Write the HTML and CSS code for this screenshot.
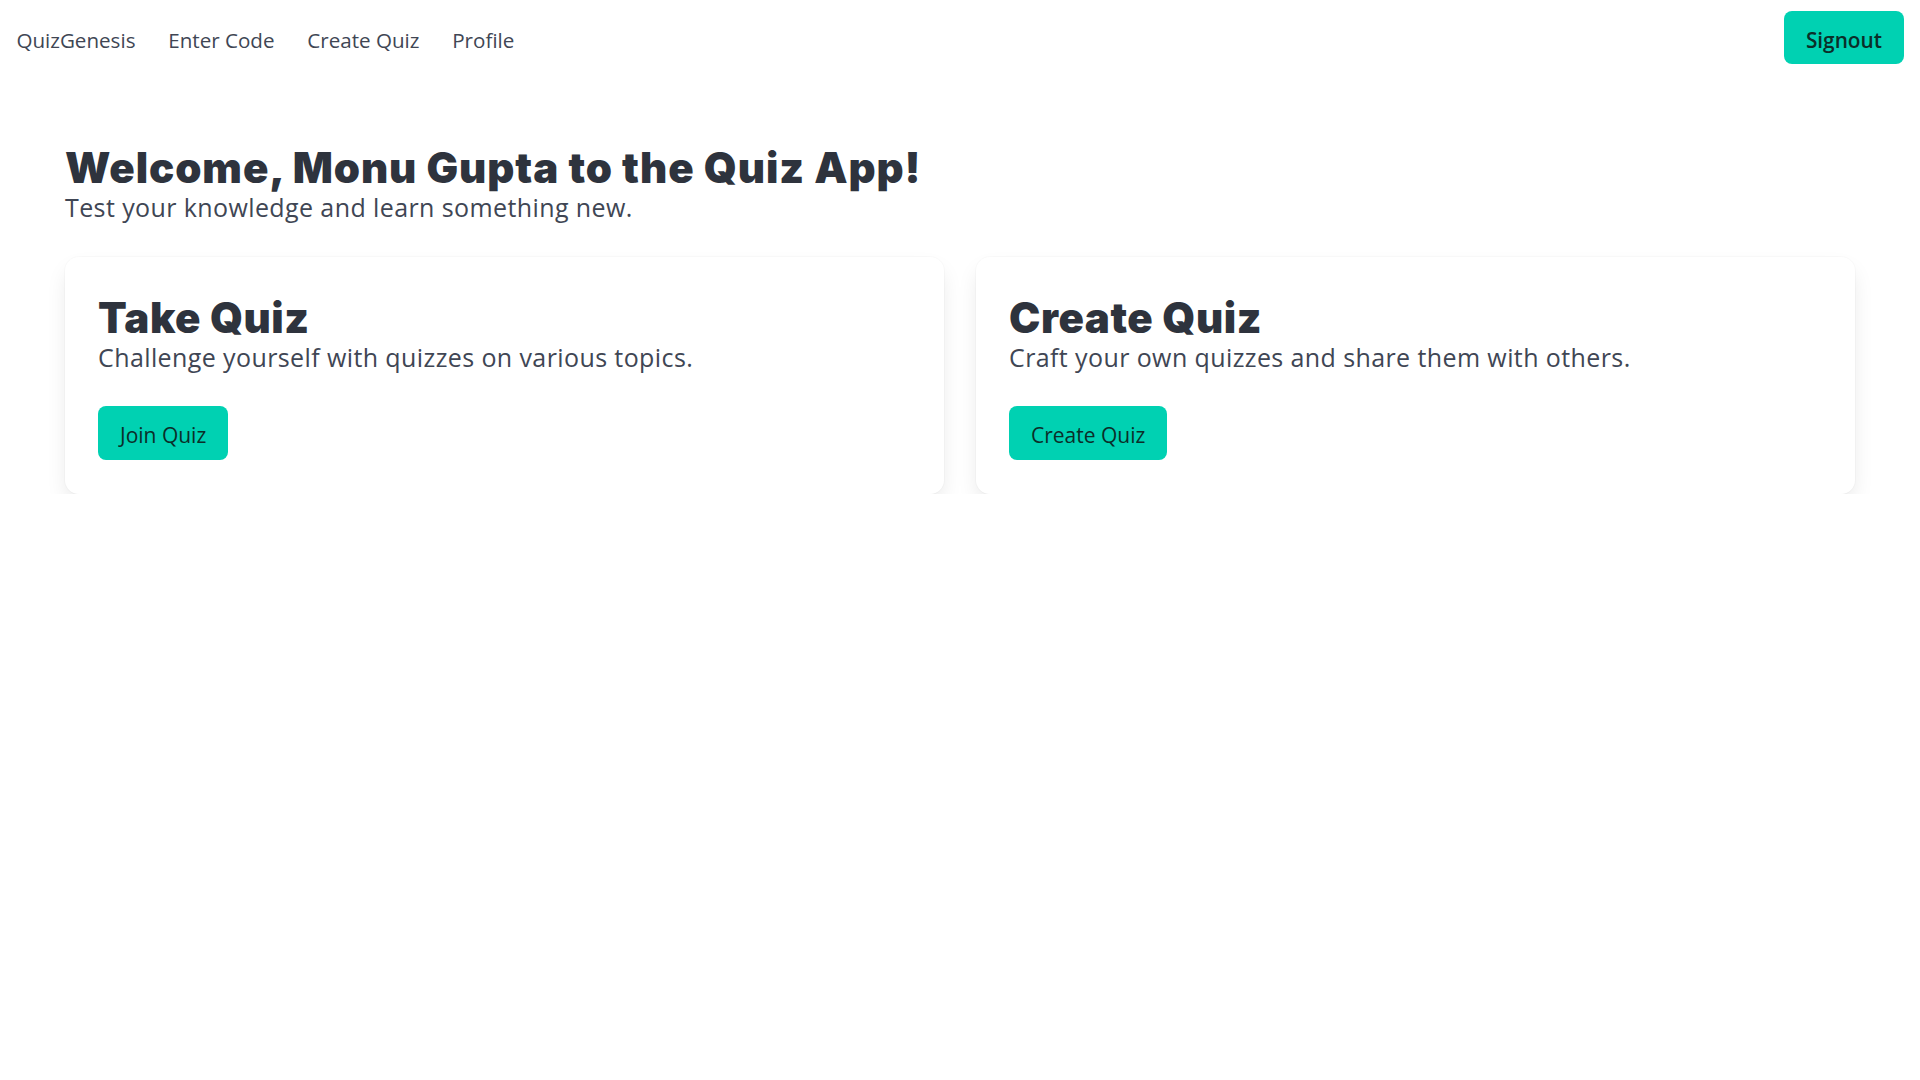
FILE: index.html
```html
<!DOCTYPE html>
<html lang="en">
<head>
<meta charset="utf-8">
<title>QuizGenesis</title>
<link rel="stylesheet" href="styles.css">
</head>
<body>
<nav class="navbar">
  <div class="nav-links">
    <a class="nav-item" href="#">QuizGenesis</a>
    <a class="nav-item" href="#">Enter Code</a>
    <a class="nav-item" href="#">Create Quiz</a>
    <a class="nav-item" href="#">Profile</a>
  </div>
  <button class="btn btn-signout">Signout</button>
</nav>
<main class="section">
  <h1 class="title">Welcome, Monu Gupta to the Quiz App!</h1>
  <p class="subtitle">Test your knowledge and learn something new.</p>
  <div class="cards">
    <div class="card">
      <h2 class="card-title">Take Quiz</h2>
      <p class="card-text">Challenge yourself with quizzes on various topics.</p>
      <button class="btn">Join Quiz</button>
    </div>
    <div class="card">
      <h2 class="card-title">Create Quiz</h2>
      <p class="card-text">Craft your own quizzes and share them with others.</p>
      <button class="btn">Create Quiz</button>
    </div>
  </div>
</main>
</body>
</html>
```
FILE: styles.css
```css
* { box-sizing: border-box; }
body {
  margin: 0;
  background: #ffffff;
  font-family: "Open Sans", "Noto Sans", sans-serif;
  color: #404654;
}
.navbar {
  display: flex;
  align-items: center;
  justify-content: space-between;
  height: 75px;
  padding-right: 16px;
}
.nav-links {
  display: flex;
  align-items: center;
  margin-top: 4px;
}
.nav-item {
  padding: 0 16.4px;
  font-size: 20.6px;
  line-height: 28px;
  color: #404654;
  text-decoration: none;
}
.btn {
  display: inline-flex;
  align-items: center;
  justify-content: center;
  height: 54px;
  padding: 3px 22px 0;
  border: none;
  border-radius: 8px;
  background: #00d1b2;
  color: #0b2e29;
  font-family: inherit;
  font-size: 21px;
  cursor: pointer;
}
.btn-signout {
  height: 53px;
  padding-top: 4px;
  font-weight: 600;
  font-size: 20.8px;
}
.section {
  padding: 0 65px;
}
.title {
  margin: 0;
  padding-top: 68px;
  font-family: "Inter", sans-serif;
  font-weight: 900;
  font-size: 42px;
  letter-spacing: 0.9px;
  line-height: 49px;
  color: #2e333d;
}
.subtitle {
  margin: -1px 0 0;
  font-size: 25px;
  letter-spacing: 0.4px;
  line-height: 33px;
  color: #404654;
}
.cards {
  display: grid;
  grid-template-columns: 1fr 1fr;
  gap: 32px;
  margin-top: 33px;
}
.card {
  background: #fff;
  border-radius: 14px;
  padding: 36px 33px 34px;
  box-shadow: 0 11px 22px -3px rgba(10,10,10,0.1), 0 0 0 1px rgba(10,10,10,0.02);
}
.card-title {
  margin: 0;
  font-family: "Inter", sans-serif;
  font-weight: 900;
  font-size: 42px;
  letter-spacing: 0.55px;
  line-height: 49px;
  color: #2e333d;
}
.card-text {
  margin: -1px 0 32px;
  font-size: 25px;
  letter-spacing: 0.4px;
  line-height: 33px;
  color: #404654;
}
```
